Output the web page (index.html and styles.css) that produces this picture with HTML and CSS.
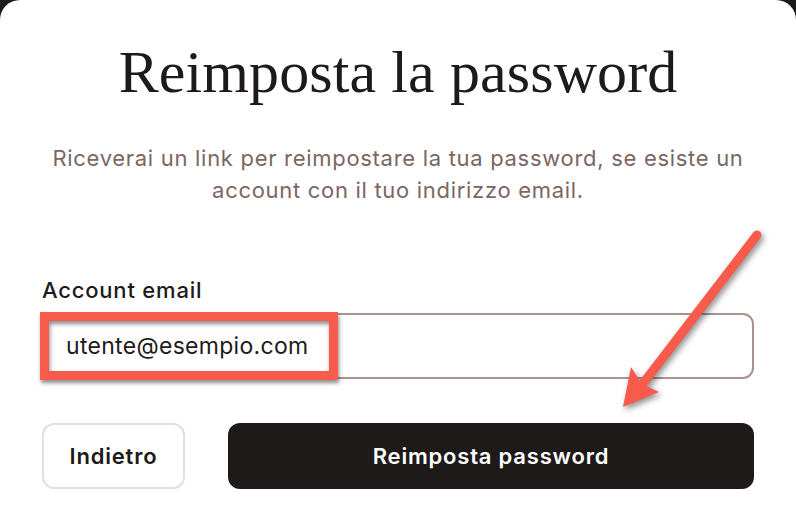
FILE: index.html
```html
<!DOCTYPE html>
<html>
    <head>
	<meta charset="UTF-8">
	<meta name="viewport" content="width=device-width, initial-scale=1.0">
	<title>Reimposta la password</title>
	<link rel="stylesheet" href="styles.css">
    </head>
    <body>
      <div class = "card">

	      <h1 class = "title">Reimposta la password</h1>

	      <p class = "lead">Riceverai un link per reimpostare la tua password, se esiste un account con il tuo indirizzo email.</p>

	      <form class = "form">
		      <label class = "label" for = "email">Account email</label>
		      <input class = "email" id = "email" type = "email" value = "utente@esempio.com">

		      <div class = "actions">
			      <button class = "back" type = "button">Indietro</button>
			      <button class = "submit" type = "button">Reimposta password</button>
		      </div>
	      </form>

	      <div class = "mark_box"></div>

	      <svg class = "mark_arrow" width = "796" height = "516" viewBox = "0 0 796 516">
		      <g class = "mark_shape">
			      <line x1 = "757" y1 = "235" x2 = "638" y2 = "390" stroke = "#f85a4c" stroke-width = "9" stroke-linecap = "round"/>
			      <polygon points = "623,407 631,367 642,384 659,392" fill = "#f85a4c"/>
		      </g>
	      </svg>
      </div>
    </body>
</html>
```

FILE: styles.css
```css
	    body {
		background-color: #1e1a1a;
		margin: 0px;
		padding: 0px;
		overflow: hidden;
	    }

		.card{
			position: relative;
			background-color: white;
			border-radius: 20px 20px 0px 0px;
			height: 516px;
			padding: 36px 42px 0px 42px;
			box-sizing: border-box;
		}

		.title{
			font-family: "Liberation Serif", serif;
			font-weight: normal;
			font-size: 60px;
			line-height: 72px;
			letter-spacing: 0.1px;
			color: #1e1a1a;
			text-align: center;
			margin: 0px;
		}

		.lead{
			font-family: Inter, sans-serif;
			font-size: 22px;
			line-height: 32px;
			letter-spacing: 0.7px;
			color: #7b6663;
			text-align: center;
			margin: 34px 0px 0px 0px;
		}

		.form{
			margin-top: 71px;
			display: flex;
			flex-direction: column;
		}

		.label{
			font-family: Inter, sans-serif;
			font-weight: 500;
			font-size: 22px;
			line-height: 26px;
			letter-spacing: 0.8px;
			color: #1e1a1a;
			margin-bottom: 10px;
		}

		.email{
			font-family: Inter, sans-serif;
			font-size: 23px;
			letter-spacing: 0.3px;
			color: #1e1a1a;
			height: 66px;
			box-sizing: border-box;
			border: 2px solid #a8938f;
			border-radius: 11px;
			padding: 0px 22px;
			outline: none;
		}

		.actions{
			display: flex;
			gap: 43px;
			margin-top: 44px;
		}

		.back, .submit{
			font-family: Inter, sans-serif;
			font-weight: 600;
			font-size: 22px;
			letter-spacing: 0.8px;
			height: 66px;
			border-radius: 12px;
		}

		.back{
			width: 143px;
			background-color: white;
			color: #1e1a1a;
			border: 2px solid #e4dfde;
		}

		.submit{
			flex: 1;
			background-color: #1e1a1a;
			color: white;
			border: none;
		}

		.mark_box{
			position: absolute;
			left: 40px;
			top: 312px;
			width: 280px;
			height: 50px;
			border: 9px solid #f85a4c;
			box-shadow: 1px 3px 4px rgba(0,0,0,0.45), inset 1px 3px 4px rgba(0,0,0,0.45);
		}

		.mark_arrow{
			position: absolute;
			left: 0px;
			top: 0px;
		}

		.mark_shape{
			filter: drop-shadow(2px 3px 3px rgba(0,0,0,0.45));
		}
```
